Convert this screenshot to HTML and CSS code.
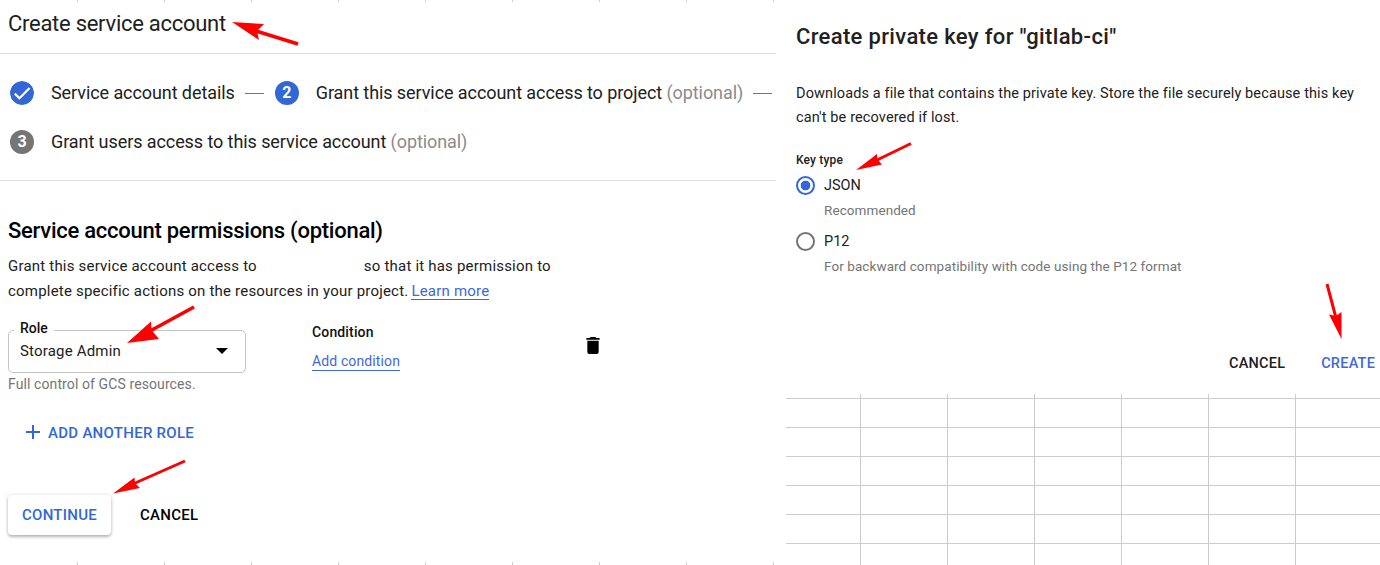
FILE: index.html
```html
<!DOCTYPE html>
<html lang="en">
<head>
<meta charset="utf-8">
<title>Create service account</title>
<link rel="stylesheet" href="styles.css">
</head>
<body>
<div class="sheet">
  <main class="account">
    <header class="account-header"><h1 class="account-title">Create service account</h1></header>
    <section class="steps">
      <div class="step-row step-row-first">
        <svg class="badge" viewBox="0 0 24 24"><circle cx="12" cy="12" r="12" fill="#3367d6"/><path d="M4.800 12.600l4.700 4.700L19.600 7.100" fill="none" stroke="#fff" stroke-width="2.200"/></svg>
        <span class="step-label">Service account details</span>
        <span class="dash"></span>
        <span class="badge badge-active">2</span>
        <span class="step-label">Grant this service account access to project <span class="optional">(optional)</span></span>
        <span class="dash dash-end"></span>
      </div>
      <div class="step-row">
        <span class="badge badge-idle">3</span>
        <span class="step-label">Grant users access to this service account <span class="optional">(optional)</span></span>
      </div>
    </section>
    <section class="permissions">
      <h2 class="permissions-title">Service account permissions (optional)</h2>
      <div class="intro">
        <div class="intro-line"><span>Grant this service account access to</span><span class="redacted"></span><span>so that it has permission to</span></div>
        <div class="intro-line"><span>complete specific actions on the resources in your project.</span><a class="link learn">Learn more</a></div>
      </div>
      <div class="binding">
        <div class="role">
          <div class="select">
            <span class="select-label">Role</span>
            <span class="select-value">Storage Admin</span>
            <svg class="caret" viewBox="0 0 12 6"><path d="M0 0h12L6 6z"/></svg>
          </div>
          <div class="hint">Full control of GCS resources.</div>
        </div>
        <div class="condition">
          <div class="condition-title">Condition</div>
          <a class="link add-condition">Add condition</a>
        </div>
        <svg class="trash" viewBox="0 0 14 18"><path d="M0 1h3.500l1-1h5l1 1H14v2H0zM1 4h12v12a2 2 0 0 1-2 2H3a2 2 0 0 1-2-2z"/></svg>
      </div>
      <div class="add-role">
        <svg class="plus" viewBox="0 0 14 14"><path d="M7 0v14M0 7h14" stroke="#3367d6" stroke-width="2"/></svg>
        <span>ADD ANOTHER ROLE</span>
      </div>
      <div class="actions">
        <span class="continue">CONTINUE</span>
        <span>CANCEL</span>
      </div>
    </section>
  </main>
  <aside class="side">
    <section class="dialog">
      <h2 class="dialog-title">Create private key for "gitlab-ci"</h2>
      <div class="dialog-text"><div>Downloads a file that contains the private key. Store the file securely because this key</div><div>can't be recovered if lost.</div></div>
      <div class="key-type">Key type</div>
      <div class="option"><span class="radio radio-on"></span><span>JSON</span></div>
      <div class="option-hint">Recommended</div>
      <div class="option"><span class="radio"></span><span>P12</span></div>
      <div class="option-hint">For backward compatibility with code using the P12 format</div>
      <div class="dialog-actions"><span>CANCEL</span><span class="create">CREATE</span></div>
    </section>
    <div class="cells"></div>
  </aside>
  <svg class="arrows" viewBox="0 0 1380 565">
    <g stroke="#f00" fill="none"><path stroke-width="3.600" d="M298 44L256 31M194 307L150 331"/><path stroke-width="3" d="M185 461L134 483.500M911 143.500L876 160.500M1327 284L1336 318"/></g>
    <g fill="#f00"><path d="M232 22L264 24 257 31 259 40zM127 343L151 321.500 151.500 330 159 339zM113 493.500L134.500 477.500 135 483 140 488zM856 170L877 154 877.500 159.500 882 164.500zM1341.500 339L1329 314.500 1336 316 1341.500 312z"/></g>
  </svg>
</div>
</body>
</html>
```
FILE: styles.css
```css
* { box-sizing: border-box; }
body { margin: 0; background: #fff; font-family: Roboto, sans-serif; color: #212121; white-space: nowrap; }
h1, h2 { margin: 0; }
.sheet {
  position: relative; display: flex; width: 1380px; height: 565px; overflow: hidden;
  background: repeating-linear-gradient(to right, transparent 0 77px, #ccc 77px 78px, transparent 78px 87px);
}
.account { width: 776px; height: 560px; margin-top: 2px; background: #fff; }
.account-header { height: 52px; border-bottom: 1px solid #e0e0e0; padding: 6px 0 0 8px; }
.account-title { font-size: 22px; font-weight: 400; line-height: 32px; letter-spacing: -0.27px; }
.steps { height: 127px; padding: 15px 0 0 10px; border-bottom: 1px solid #e0e0e0; }
.step-row { display: flex; align-items: center; height: 50px; }
.step-row-first { height: 48px; }
.badge { width: 24px; height: 24px; border-radius: 50%; flex: none; color: #fff; font-weight: 700; font-size: 16px; line-height: 24px; text-align: center; }
.badge-active { background: #3367d6; }
.badge-idle { background: #757575; }
.step-label { margin-left: 17px; font-size: 18px; line-height: 22px; letter-spacing: -0.08px; }
.optional { color: #8b8b8b; }
.dash { width: 19px; height: 1px; margin: 0 11px 0 10px; background: #757575; flex: none; }
.dash-end { margin: 0 0 0 10px; }
.permissions { padding: 34px 0 0 8px; }
.permissions-title { font-size: 22px; font-weight: 500; line-height: 32px; letter-spacing: -0.26px; color: #000; }
.intro { padding-top: 7px; font-size: 15px; letter-spacing: 0.2px; }
.intro-line { display: flex; line-height: 24.5px; }
.redacted { width: 107px; }
.link { color: #3f68dc; }
.learn { height: 21px; margin-left: 3px; border-bottom: 1px solid #3f68dc; }
.binding { display: flex; height: 77px; margin-top: 17px; }
.role { width: 304px; padding-top: 10px; }
.select { position: relative; display: flex; align-items: center; justify-content: space-between; width: 238px; height: 43px; padding: 0 17px 1px 11px; border: 1px solid #c4c4c4; border-radius: 5px; font-size: 15px; line-height: 18px; letter-spacing: 0.18px; }
.select-label { position: absolute; left: 5px; top: -13px; padding: 0 6px; background: #fff; font-size: 14px; line-height: 20px; letter-spacing: 0; font-weight: 500; color: #111; }
.caret { width: 12px; height: 6px; }
.hint { padding-top: 1px; font-size: 14px; line-height: 20px; letter-spacing: 0.1px; color: #757575; }
.condition { width: 274px; padding-top: 2px; }
.condition-title { font-size: 14px; font-weight: 500; line-height: 20px; letter-spacing: 0.15px; color: #111; }
.add-condition { display: inline-block; height: 21px; margin-top: 8px; font-size: 14px; line-height: 22px; letter-spacing: 0.12px; border-bottom: 1px solid #3f68dc; }
.trash { width: 14px; height: 17px; margin-top: 17px; }
.add-role { display: flex; align-items: center; height: 24px; margin: 23px 0 0 17.5px; gap: 8.5px; font-size: 15px; line-height: 18px; font-weight: 500; letter-spacing: 0.28px; color: #3367d6; }
.add-role span { padding-top: 1px; }
.plus { width: 14px; height: 14px; }
.actions { display: flex; align-items: center; margin-top: 51px; gap: 29px; font-size: 15px; line-height: 20px; font-weight: 500; letter-spacing: 0.27px; color: #000; }
.continue { width: 103px; height: 40px; line-height: 41px; text-align: center; border-radius: 4px; color: #3367d6; box-shadow: 0 2px 3px rgba(0,0,0,.25), 0 0 4px rgba(0,0,0,.12); }
.side { width: 604px; background: #fff; }
.dialog { height: 394px; padding: 21px 0 0 20px; }
.dialog-title { font-size: 22px; font-weight: 500; line-height: 32px; letter-spacing: 0.34px; }
.dialog-text { padding-top: 29px; font-size: 14.5px; line-height: 23.5px; letter-spacing: 0.12px; }
.key-type { margin-top: 21px; font-size: 12px; line-height: 20px; font-weight: 500; letter-spacing: 0.16px; }
.option { display: flex; align-items: center; gap: 9px; height: 30px; font-size: 14.5px; line-height: 20px; }
.option span:last-child { padding-top: 1px; }
.radio { width: 19px; height: 19px; border: 2px solid #757575; border-radius: 50%; }
.radio-on { border-color: #3367d6; background: radial-gradient(circle, #3367d6 4.5px, #fff 5.2px); }
.option-hint { height: 26px; padding-left: 28px; font-size: 13.5px; line-height: 20px; letter-spacing: 0.08px; color: #757575; }
.dialog-actions { display: flex; margin-top: 66px; padding-left: 433px; gap: 36px; font-size: 14.5px; font-weight: 500; line-height: 32px; letter-spacing: 0.22px; }
.create { color: #3f68dc; }
.cells {
  height: 171px; margin-left: 10px;
  background: repeating-linear-gradient(to bottom, transparent 0 4px, #ccc 4px 5px, transparent 5px 29px),
    repeating-linear-gradient(to right, transparent 0 74px, #ccc 74px 75px, transparent 75px 87px);
}
.arrows { position: absolute; left: 0; top: 0; width: 1380px; height: 565px; pointer-events: none; }
```
